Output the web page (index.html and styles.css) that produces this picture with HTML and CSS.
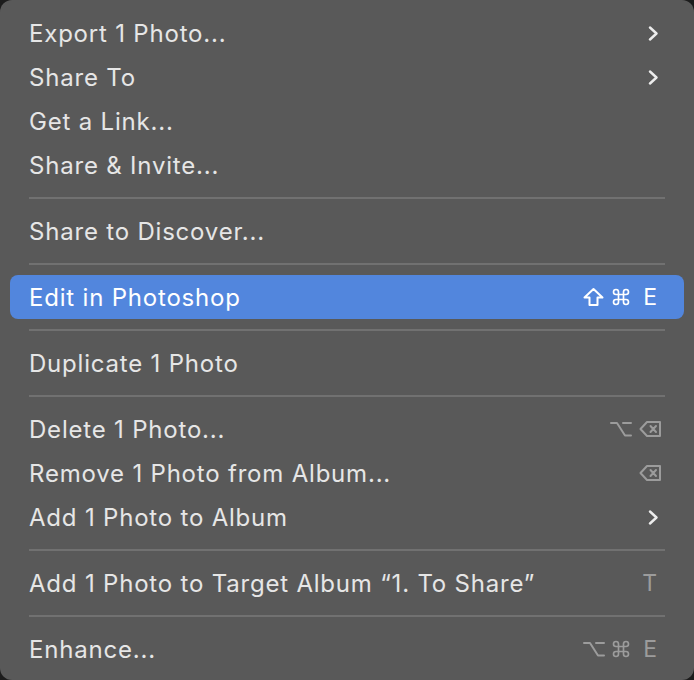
FILE: index.html
```html
<!DOCTYPE html>
<html lang="en">

<head>
    <meta charset="UTF-8">
    <meta name="viewport" content="width=device-width, initial-scale=1.0">
    <title>Photo Context Menu</title>
    <link rel="stylesheet" href="styles.css">
</head>

<body>
    <div class="menu">
        <div class="item">
            <span class="label">Export 1 Photo...</span>
            <span class="keys chev"><svg width="11" height="15" viewBox="0 0 11 15"><polyline points="2,1.5 8.5,7.5 2,13.5" /></svg></span>
        </div>
        <div class="item">
            <span class="label">Share To</span>
            <span class="keys chev"><svg width="11" height="15" viewBox="0 0 11 15"><polyline points="2,1.5 8.5,7.5 2,13.5" /></svg></span>
        </div>
        <div class="item"><span class="label">Get a Link...</span></div>
        <div class="item"><span class="label">Share &amp; Invite...</span></div>

        <div class="separator"></div>

        <div class="item"><span class="label">Share to Discover...</span></div>

        <div class="separator"></div>

        <div class="item selected">
            <span class="label">Edit in Photoshop</span>
            <span class="keys letter">
                <!-- shift -->
                <svg class="glyph" width="23" height="20" viewBox="0 0 23 20"><path d="M11.5 2 L20.5 10.5 H15.5 V18 H7.5 V10.5 H2.5 Z" /></svg>
                <!-- command -->
                <svg class="glyph" width="20" height="20" viewBox="0 0 24 24"><path d="M15 6v12a3 3 0 1 0 3-3H6a3 3 0 1 0 3 3V6a3 3 0 1 0-3 3h12a3 3 0 1 0-3-3" /></svg>
                <span class="key">E</span>
            </span>
        </div>

        <div class="separator"></div>

        <div class="item"><span class="label">Duplicate 1 Photo</span></div>

        <div class="separator"></div>

        <div class="item">
            <span class="label">Delete 1 Photo...</span>
            <span class="keys">
                <!-- option -->
                <svg class="glyph" width="22" height="20" viewBox="0 0 22 20"><path d="M1 4 H7 L15 16.5 H21 M13 4 H21" /></svg>
                <!-- delete -->
                <svg class="glyph" width="23" height="20" viewBox="0 0 23 20"><path d="M8 3 H21 V17 H8 L1.5 10 Z M11.5 7 L17 13 M17 7 L11.5 13" /></svg>
            </span>
        </div>
        <div class="item">
            <span class="label">Remove 1 Photo from Album...</span>
            <span class="keys">
                <svg class="glyph" width="23" height="20" viewBox="0 0 23 20"><path d="M8 3 H21 V17 H8 L1.5 10 Z M11.5 7 L17 13 M17 7 L11.5 13" /></svg>
            </span>
        </div>
        <div class="item">
            <span class="label">Add 1 Photo to Album</span>
            <span class="keys chev"><svg width="11" height="15" viewBox="0 0 11 15"><polyline points="2,1.5 8.5,7.5 2,13.5" /></svg></span>
        </div>

        <div class="separator"></div>

        <div class="item">
            <span class="label">Add 1 Photo to Target Album “1. To Share”</span>
            <span class="keys letter"><span class="key">T</span></span>
        </div>

        <div class="separator"></div>

        <div class="item">
            <span class="label">Enhance...</span>
            <span class="keys letter">
                <svg class="glyph" width="22" height="20" viewBox="0 0 22 20"><path d="M1 4 H7 L15 16.5 H21 M13 4 H21" /></svg>
                <svg class="glyph" width="20" height="20" viewBox="0 0 24 24"><path d="M15 6v12a3 3 0 1 0 3-3H6a3 3 0 1 0 3 3V6a3 3 0 1 0-3 3h12a3 3 0 1 0-3-3" /></svg>
                <span class="key">E</span>
            </span>
        </div>
    </div>
</body>

</html>
```

FILE: styles.css
```css
body {
    margin: 0;
    background-color: #1c1c1c;
    font-family: Inter, "Noto Sans", sans-serif;
}

.menu {
    width: 694px;
    height: 680px;
    box-sizing: border-box;
    padding-top: 11px;
    background-color: #595959;
    border-radius: 12px;
    overflow: hidden;
}

.item {
    display: flex;
    align-items: center;
    justify-content: space-between;
    height: 44px;
    margin: 0 10px;
    padding: 0 22px 0 19px;
    border-radius: 8px;
    color: #e6e6e6;
    font-size: 24px;
    letter-spacing: 0.8px;
}

.item.selected {
    background-color: #5286dd;
    color: #fff;
}

.label {
    white-space: nowrap;
}

.keys {
    display: flex;
    align-items: center;
    gap: 7px;
    color: #9c9c9c;
    letter-spacing: 0;
}

.keys.letter {
    padding-right: 5px;
    gap: 6px;
}

.keys.chev {
    padding-right: 3px;
}

.selected .keys {
    color: #fff;
    gap: 6px;
}

.glyph {
    fill: none;
    stroke: currentColor;
    stroke-width: 2;
    stroke-linejoin: round;
    stroke-linecap: round;
}

.key {
    margin-left: 6px;
    font-size: 23px;
}

.chev svg {
    fill: none;
    stroke: #ececec;
    stroke-width: 2.4;
    stroke-linecap: round;
    stroke-linejoin: round;
}

.separator {
    height: 2px;
    margin: 10px 29px;
    background-color: #717171;
}
```
